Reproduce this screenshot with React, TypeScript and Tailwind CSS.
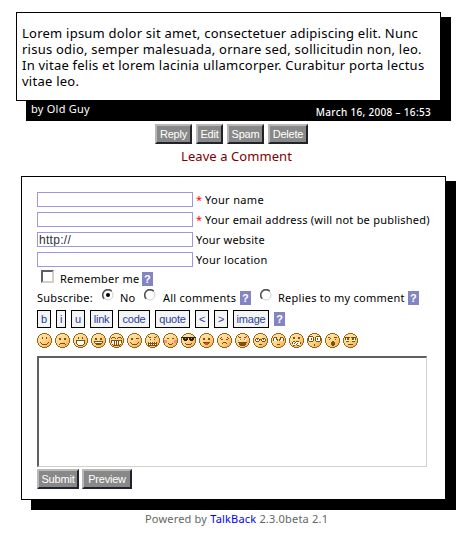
import type { ReactNode } from 'react';

type Pixel = [number, number, number, number, string?];

const OUTLINE: Pixel[] = [
  [5, 0, 5, 1], [3, 1, 2, 1], [10, 1, 2, 1], [2, 2, 1, 1], [12, 2, 1, 1],
  [1, 3, 1, 2], [13, 3, 1, 2], [0, 5, 1, 5], [14, 5, 1, 5], [1, 10, 1, 2],
  [13, 10, 1, 2], [2, 12, 1, 1], [12, 12, 1, 1], [3, 13, 2, 1], [10, 13, 2, 1], [5, 14, 5, 1],
];

const EYES: Pixel[] = [[5, 4, 1, 2], [9, 4, 1, 2]];
const SMILE: Pixel[] = [[3, 9, 1, 1], [11, 9, 1, 1], [4, 10, 1, 1], [10, 10, 1, 1], [5, 11, 5, 1]];
const W = '#ffffff';
const P = '#f58b86';
const R = '#e8453c';
const K = '#302010';

const GLASSES: Pixel[] = [
  [3, 5, 3, 1], [9, 5, 3, 1], [2, 6, 1, 2], [6, 6, 3, 1], [12, 6, 1, 2], [3, 8, 3, 1], [9, 8, 3, 1],
  [3, 6, 3, 2, W], [9, 6, 3, 2, W], [4, 6, 1, 1], [10, 6, 1, 1], [6, 7, 1, 1], [8, 7, 1, 1],
];

const FACES: Pixel[][] = [
  [...EYES, ...SMILE],
  [[4, 5, 2, 2], [9, 5, 2, 2], [5, 10, 5, 1], [4, 11, 1, 1], [10, 11, 1, 1]],
  [...EYES, [3, 7, 9, 1], [3, 8, 1, 3], [11, 8, 1, 3], [4, 8, 7, 3, W], [4, 11, 1, 1], [10, 11, 1, 1], [5, 11, 5, 1, W], [5, 12, 5, 1]],
  [[4, 5, 2, 2], [9, 5, 2, 2], [3, 8, 9, 1], [3, 9, 1, 1], [11, 9, 1, 1], [4, 9, 7, 1, W], [4, 10, 7, 1], [5, 11, 5, 1]],
  [[3, 4, 3, 1], [9, 4, 3, 1], [2, 5, 1, 1], [6, 5, 1, 1], [8, 5, 1, 1], [12, 5, 1, 1], [2, 7, 11, 1], [2, 8, 1, 2], [12, 8, 1, 2], [3, 8, 9, 3, W], [5, 8, 1, 4], [7, 8, 1, 4], [9, 8, 1, 4], [3, 11, 1, 1], [11, 11, 1, 1], [4, 12, 7, 1]],
  [[4, 5, 2, 2], [9, 5, 3, 1], ...SMILE],
  [[3, 3, 1, 1], [4, 4, 2, 1], [11, 3, 1, 1], [9, 4, 2, 1], [5, 6, 1, 1], [9, 6, 1, 1], [3, 9, 9, 4], [4, 9, 1, 1, W], [6, 9, 1, 1, W], [8, 9, 1, 1, W], [10, 9, 1, 1, W], [4, 11, 1, 1, W], [6, 11, 1, 1, W], [8, 11, 1, 1, W], [10, 11, 1, 1, W]],
  [[4, 5, 2, 1], [9, 5, 2, 1], [1, 7, 3, 3, P], [11, 7, 3, 3, P], [5, 10, 1, 1], [6, 11, 3, 1], [9, 10, 1, 1]],
  [[0, 4, 15, 1, K], [2, 5, 5, 2, K], [8, 5, 5, 2, K], [3, 7, 3, 1, K], [9, 7, 3, 1, K], [4, 5, 1, 1, '#ad9c77'], [10, 5, 1, 1, '#ad9c77'], [4, 10, 1, 1], [5, 11, 5, 1], [10, 10, 1, 1]],
  [[4, 5, 2, 2], [9, 5, 2, 2], [4, 9, 7, 1], [6, 10, 3, 2, R], [5, 10, 1, 1], [9, 10, 1, 1]],
  [[4, 4, 1, 1], [3, 5, 1, 1], [10, 4, 1, 1], [11, 5, 1, 1], [4, 6, 2, 1], [9, 6, 2, 1], [6, 9, 3, 1], [5, 10, 1, 1], [9, 10, 1, 1]],
  [[3, 3, 1, 1], [4, 4, 2, 1], [11, 3, 1, 1], [9, 4, 2, 1], [3, 6, 3, 2, W], [9, 6, 3, 2, W], [5, 6, 1, 1, R], [9, 6, 1, 1, R], [3, 7, 1, 1, P], [11, 7, 1, 1, P], [3, 9, 9, 1], [4, 10, 7, 2], [5, 12, 5, 1]],
  [...GLASSES, [6, 11, 3, 1]],
  [[3, 4, 3, 1], [9, 4, 3, 1], [2, 5, 1, 3], [12, 5, 1, 3], [3, 5, 3, 3, W], [9, 5, 3, 3, W], [5, 5, 1, 2], [9, 5, 1, 2], [6, 6, 1, 2], [8, 6, 1, 2], [6, 11, 3, 1]],
  [[4, 4, 2, 2], [9, 4, 2, 2], [4, 8, 2, 1], [7, 8, 3, 1], [3, 9, 1, 2], [11, 9, 1, 2], [4, 9, 7, 3, W], [6, 9, 1, 1], [5, 10, 1, 1], [8, 10, 1, 1], [7, 11, 1, 1], [4, 12, 2, 1], [8, 12, 2, 1]],
  [[2, 3, 4, 1], [9, 3, 4, 1], [1, 4, 1, 4], [6, 4, 1, 4], [8, 4, 1, 4], [13, 4, 1, 4], [2, 8, 4, 1], [9, 8, 4, 1], [2, 4, 4, 4, W], [9, 4, 4, 4, W], [4, 5, 1, 2], [10, 5, 1, 2], [7, 11, 1, 2]],
  [[3, 4, 2, 1], [5, 5, 1, 1], [9, 4, 3, 1], [4, 6, 1, 1], [10, 6, 1, 1], [7, 8, 2, 1], [6, 9, 4, 3], [7, 12, 2, 1]],
  [[2, 4, 5, 1], [8, 4, 5, 1], [3, 5, 3, 3, W], [9, 5, 3, 3, W], [4, 5, 2, 2], [9, 5, 2, 2], [2, 5, 1, 2], [12, 5, 1, 2], [3, 8, 3, 1], [9, 8, 3, 1], [5, 11, 5, 1]],
];

function Face({ pixels }: { pixels: Pixel[] }) {
  return (
    <svg width="15" height="15" viewBox="0 0 15 15" shapeRendering="crispEdges" className="block shrink-0">
      <path d="M5 0h5v1h2v1h1v1h1v2h1v5h-1v2h-1v1h-1v1h-2v1h-5v-1h-2v-1h-1v-1h-1v-2h-1v-5h1v-2h1v-1h1v-1h2z" fill="url(#skin)" />
      {[...OUTLINE, ...pixels].map(([x, y, w, h, fill], i) => (
        <rect key={i} x={x} y={y} width={w} height={h} fill={fill ?? (i < OUTLINE.length ? '#9a6512' : '#80500c')} />
      ))}
    </svg>
  );
}

function Label({ children, className }: { children: ReactNode; className: string }) {
  return <span className={`block shrink-0 whitespace-nowrap ${className}`}>{children}</span>;
}

function GreyButton({ children, className }: { children: string; className: string }) {
  return (
    <button
      className={`h-5 shrink-0 border-2 border-t-[#b8b8b8] border-r-[#20232b] border-b-[#20232b] border-l-[#b8b8b8] bg-[#888] text-center font-['Liberation_Sans',Arial,sans-serif] text-[11px] leading-4 tracking-[-0.2px] whitespace-nowrap text-white ${className}`}
    >
      {children}
    </button>
  );
}

function Tag({ children, className }: { children: string; className: string }) {
  return (
    <button
      className={`h-[18px] shrink-0 border border-black bg-[#f4f4f4] text-center font-['Liberation_Sans',Arial,sans-serif] text-[11px] leading-4 tracking-[-0.2px] whitespace-nowrap text-[#1f3f9f] ${className}`}
    >
      {children}
    </button>
  );
}

function Help({ className = '' }: { className?: string }) {
  return (
    <span className={`block h-[14px] w-[11px] shrink-0 bg-[#8484c2] text-center font-['Liberation_Sans',Arial,sans-serif] text-[11px] leading-[14px] font-bold text-white ${className}`}>
      ?
    </span>
  );
}

function Radio({ checked = false, className = '' }: { checked?: boolean; className?: string }) {
  return (
    <svg width="12" height="12" viewBox="0 0 12 12" className={`block shrink-0 ${className}`}>
      <circle cx="6" cy="6" r="5" fill="#fff" stroke="#d4d0c8" />
      <path d="M2.2 9.8A5.3 5.3 0 0 1 9.8 2.2" fill="none" stroke="#505050" strokeWidth="1.5" />
      {checked && <circle cx="6" cy="6" r="2" fill="#000" />}
    </svg>
  );
}

function Field({ label, required = false, value = '', className }: { label: string; required?: boolean; value?: string; className: string }) {
  return (
    <div className="flex h-5 items-start">
      <input
        defaultValue={value}
        className="block h-[15px] w-[156px] shrink-0 border border-[#a096e0] bg-white px-px font-['Liberation_Sans',Arial,sans-serif] text-[12px] leading-[13px] tracking-[0.3px] text-[#303040] outline-none"
      />
      {required && <span className="ml-[3px] w-[6px] text-[11px] leading-4 text-[#f00]">*</span>}
      <Label className={`ml-[3px] text-[11px] leading-4 ${className}`}>{label}</Label>
    </div>
  );
}

export default function App() {
  return (
    <div className="flex h-[536px] w-[469px] flex-col items-start overflow-hidden bg-white font-['Noto_Sans','Open_Sans',sans-serif] text-black">
      <svg width="0" height="0" className="block h-0 w-0">
        <defs>
          <linearGradient id="skin" x1="0" y1="0" x2="1" y2="1">
            <stop offset="0" stopColor="#ffe9b4" />
            <stop offset="0.5" stopColor="#ffd68a" />
            <stop offset="1" stopColor="#eda34a" />
          </linearGradient>
        </defs>
      </svg>

      <section className="mt-[17px] ml-[26px] flex h-[104px] w-[425px] shrink-0 flex-col bg-black">
        <div className="-mt-[5px] -ml-[10px] h-[89px] w-[425px] shrink-0 border border-black bg-white pt-3 pl-[5px] text-[13px] leading-4">
          <Label className="tracking-[0.235px]">Lorem ipsum dolor sit amet, consectetuer adipiscing elit. Nunc</Label>
          <Label className="tracking-[0.23px]">risus odio, semper malesuada, ornare sed, sollicitudin non, leo.</Label>
          <Label className="tracking-[0.235px]">In vitae felis et lorem lacinia ullamcorper. Curabitur porta lectus</Label>
          <Label className="tracking-[0.25px]">vitae leo.</Label>
        </div>
        <div className="flex justify-between pr-5 pl-[5px] text-white">
          <Label className="text-[11px] leading-4 tracking-[0.25px]">by Old Guy</Label>
          <Label className="pt-[3px] text-[10px] leading-4 font-medium tracking-[0.32px]">March 16, 2008 – 16:53</Label>
        </div>
      </section>

      <div className="mt-[3px] ml-[155px] flex gap-1">
        <GreyButton className="w-[37px]">Reply</GreyButton>
        <GreyButton className="w-[27px]">Edit</GreyButton>
        <GreyButton className="w-[37px]">Spam</GreyButton>
        <GreyButton className="w-10">Delete</GreyButton>
      </div>
      <Label className="mt-1 ml-[181px] h-4 text-[13px] leading-4 tracking-[0.07px] text-[#800000]">Leave a Comment</Label>

      <section className="mt-[17px] ml-[31px] flex h-[329px] w-[425px] shrink-0 flex-col bg-black">
        <form className="-mt-[5px] -ml-[10px] flex h-[324px] w-[425px] shrink-0 flex-col border border-black bg-white pt-[15px] pl-[15px]">
          <Field label="Your name" required className="tracking-[0.33px]" />
          <Field label="Your email address (will not be published)" required className="tracking-[0.23px]" />
          <Field label="Your website" value="http://" className="tracking-[0.2px]" />
          <Field label="Your location" className="tracking-[0.3px]" />

          <div className="flex h-[17px] items-start text-[11px] leading-4 tracking-[0.25px]">
            <span className="mt-[-2px] ml-1 block h-[13px] w-[13px] shrink-0 border-2 border-t-[#606060] border-r-[#d4d0c8] border-b-[#d4d0c8] border-l-[#606060] bg-white" />
            <Label className="mt-[-1px] ml-[6px] w-[82px]">Remember me</Label>
            <Help />
          </div>
          <div className="flex h-[21px] items-start text-[11px] leading-4 tracking-[0.25px]">
            <Label className="mt-px w-[65px]">Subscribe:</Label>
            <Radio checked />
            <Label className="mt-px ml-[6px] w-6">No</Label>
            <Radio />
            <Label className="mt-px ml-[7px] w-[77px]">All comments</Label>
            <Help className="mt-[2px]" />
            <Radio className="ml-[9px]" />
            <Label className="mt-px ml-[6px] w-[130px]">Replies to my comment</Label>
            <Help className="mt-[2px]" />
          </div>
          <div className="flex h-[23px] items-start gap-[5px]">
            <Tag className="w-[14px]">b</Tag>
            <Tag className="w-[10px]">i</Tag>
            <Tag className="w-[14px]">u</Tag>
            <Tag className="w-[23px]">link</Tag>
            <Tag className="w-[32px]">code</Tag>
            <Tag className="w-[35px]">quote</Tag>
            <Tag className="w-[14px]">&lt;</Tag>
            <Tag className="w-[14px]">&gt;</Tag>
            <Tag className="w-[36px]">image</Tag>
            <Help className="mt-[2px]" />
          </div>
          <div className="flex h-[23px] items-start gap-[3px]">
            {FACES.map((pixels, i) => (
              <Face key={i} pixels={pixels} />
            ))}
          </div>
          <textarea className="block h-[111px] w-[390px] shrink-0 resize-none border-2 border-t-[#606060] border-r border-r-[#d4d0c8] border-b border-b-[#d4d0c8] border-l-[#606060] bg-white outline-none" />
          <div className="mt-[2px] flex gap-[3px]">
            <GreyButton className="w-[42px]">Submit</GreyButton>
            <GreyButton className="w-[50px]">Preview</GreyButton>
          </div>
        </form>
      </section>

      <Label className="mt-px ml-[145px] text-[11px] leading-4 tracking-[0.19px] text-[#666]">
        Powered by <a className="text-[#00f]">TalkBack</a> 2.3.0beta 2.1
      </Label>
    </div>
  );
}
